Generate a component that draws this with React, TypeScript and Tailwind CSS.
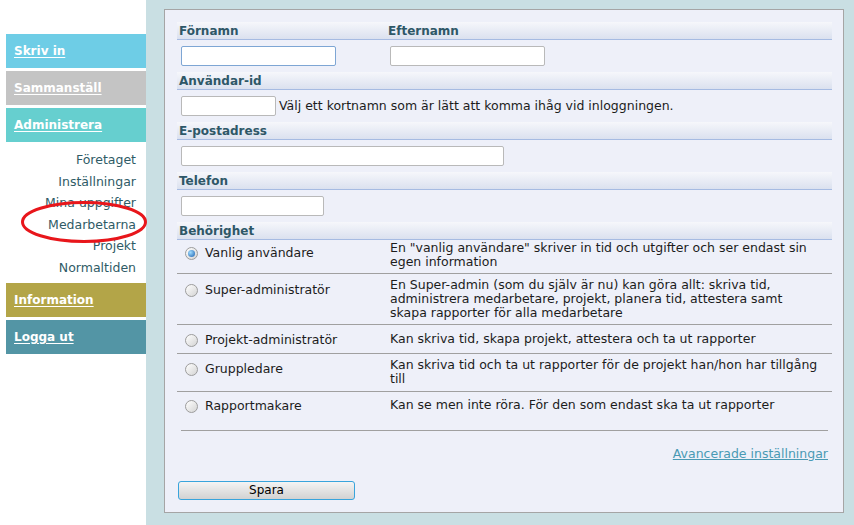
import React from 'react';

const menuTop = [
  { label: 'Skriv in', cls: 'bg-[#6ecde6]' },
  { label: 'Sammanställ', cls: 'bg-[#c4c4c4]' },
  { label: 'Administrera', cls: 'bg-[#66cfcf]' },
];

const subItems = ['Företaget', 'Inställningar', 'Mina uppgifter', 'Medarbetarna', 'Projekt', 'Normaltiden'];

// desc is split per line so wrapping matches the original page
const roles = [
  {
    label: 'Vanlig användare',
    desc: ['En "vanlig användare" skriver in tid och utgifter och ser endast sin', 'egen information'],
    row: 'h-[34px] pt-[1px] border-b',
    lab: 'mt-[5px]',
    checked: true,
  },
  {
    label: 'Super-administratör',
    desc: [
      'En Super-admin (som du själv är nu) kan göra allt: skriva tid,',
      'administrera medarbetare, projekt, planera tid, attestera samt',
      'skapa rapporter för alla medarbetare',
    ],
    row: 'h-[51px] pt-[4px] border-b',
    lab: 'mt-[5px]',
  },
  {
    label: 'Projekt-administratör',
    desc: ['Kan skriva tid, skapa projekt, attestera och ta ut rapporter'],
    row: 'h-[29px] pt-[7px] border-b',
    lab: 'mt-[1px]',
  },
  {
    label: 'Gruppledare',
    desc: ['Kan skriva tid och ta ut rapporter för de projekt han/hon har tillgång', 'till'],
    row: 'h-[38px] pt-[4px] border-b',
    lab: 'mt-[4px]',
  },
  {
    label: 'Rapportmakare',
    desc: ['Kan se men inte röra. För den som endast ska ta ut rapporter'],
    row: 'h-[30px] pt-[6px]',
    lab: 'mt-[1px]',
  },
];

const SectionHeader: React.FC<{ children: React.ReactNode }> = ({ children }) => (
  <div className="h-[18px] bg-linear-to-b from-[#f6f7fb] to-[#dbe1ef] border-b border-[#a6bbe2] pl-[2px] pt-[2px] text-[12px] leading-[15px] font-bold text-[#2e5767]">
    {children}
  </div>
);

const Radio: React.FC<{ checked?: boolean }> = ({ checked }) => (
  <span className="w-[13px] h-[13px] rounded-full border border-[#9c9c9c] bg-linear-to-br from-[#ffffff] to-[#d4d4d4] flex items-center justify-center shrink-0">
    {checked && (
      <span className="w-[7px] h-[7px] rounded-full bg-[radial-gradient(circle_at_35%_35%,#9fdcff,#1b5fae)]" />
    )}
  </span>
);

const MenuButton: React.FC<{ label: string; className: string }> = ({ label, className }) => (
  <div className={`h-[34px] flex items-center px-[8px] ${className}`}>
    <span className="text-white font-bold text-[12px] underline underline-offset-2">{label}</span>
  </div>
);

export default function App() {
  return (
    <div
      className="relative flex w-full h-[525px] overflow-hidden text-[#1c1c1c]"
      style={{ fontFamily: '"DejaVu Sans", Verdana, sans-serif' }}
    >
      {/* Sidebar */}
      <div className="w-[146px] shrink-0 bg-white pt-[34px] pl-[6px]">
        {menuTop.map((m, i) => (
          <MenuButton key={m.label} label={m.label} className={`${m.cls} ${i < 2 ? 'mb-[3px]' : ''}`} />
        ))}
        <div className="pt-[7px] pb-[4px] pr-[10px] text-right text-[12.5px] leading-[21.6px] text-[#2f5b66]">
          {subItems.map(s => (
            <div key={s}>{s}</div>
          ))}
        </div>
        <MenuButton label="Information" className="bg-[#b3a548] mb-[3px]" />
        <MenuButton label="Logga ut" className="bg-[#5395a5]" />
      </div>

      {/* Red annotation circle */}
      <svg className="absolute left-[20px] top-[199px]" width="130" height="46" viewBox="0 0 130 46">
        <ellipse cx="64" cy="23" rx="61.5" ry="19.5" fill="none" stroke="#e8161b" strokeWidth="3" />
      </svg>

      {/* Main */}
      <div className="flex-1 bg-[#c9dfe3] pl-[18px] pt-[9px]">
        <div className="w-[680px] h-[504px] border border-[#a5a5a5] bg-[#eef0f9] pt-[12px] pl-[12px] pr-[11px]">
          {/* Names */}
          <SectionHeader>
            <div className="flex">
              <span className="w-[209px]">Förnamn</span>
              <span>Efternamn</span>
            </div>
          </SectionHeader>
          <div className="flex mt-[6px] mb-[6px] pl-[4px]">
            <input className="w-[155px] h-[20px] bg-white border border-[#7ea6d4] rounded-[2px] outline-none" />
            <input className="ml-[54px] w-[155px] h-[20px] bg-white border border-[#b9b9b9] rounded-[2px] outline-none" />
          </div>

          <SectionHeader>Användar-id</SectionHeader>
          <div className="flex items-center mt-[6px] mb-[6px] pl-[4px]">
            <input className="w-[95px] h-[20px] bg-white border border-[#b9b9b9] rounded-[2px] outline-none" />
            <span className="ml-[3px] text-[12.5px]">Välj ett kortnamn som är lätt att komma ihåg vid inloggningen.</span>
          </div>

          <SectionHeader>E-postadress</SectionHeader>
          <div className="mt-[6px] mb-[6px] pl-[4px]">
            <input className="block w-[323px] h-[20px] bg-white border border-[#b9b9b9] rounded-[2px] outline-none" />
          </div>

          <SectionHeader>Telefon</SectionHeader>
          <div className="mt-[6px] mb-[6px] pl-[4px]">
            <input className="block w-[143px] h-[20px] bg-white border border-[#b9b9b9] rounded-[2px] outline-none" />
          </div>

          <SectionHeader>Behörighet</SectionHeader>
          {roles.map(r => (
            <div key={r.label} className={`flex items-start border-[#a0a0a0] text-[12.5px] leading-[14px] ${r.row}`}>
              <div className={`w-[213px] shrink-0 flex items-center pl-[8px] gap-[7px] ${r.lab}`}>
                <Radio checked={r.checked} />
                <span>{r.label}</span>
              </div>
              <div className="whitespace-nowrap">
                {r.desc.map(line => (
                  <div key={line}>{line}</div>
                ))}
              </div>
            </div>
          ))}

          <div className="mt-[8px] mx-[4px] border-t border-[#a0a0a0]" />
          <div className="mt-[16px] pr-[4px] text-right text-[12.5px] leading-[14px]">
            <a href="#" className="text-[#4a9ab4] underline">Avancerade inställningar</a>
          </div>
          <button className="mt-[20px] ml-[1px] w-[177px] h-[19px] border border-[#38a4dc] rounded-[3px] bg-linear-to-b from-[#f4f4f4] to-[#d2d2d2] text-[12px] leading-[17px] text-black">
            Spara
          </button>
        </div>
      </div>
    </div>
  );
}
